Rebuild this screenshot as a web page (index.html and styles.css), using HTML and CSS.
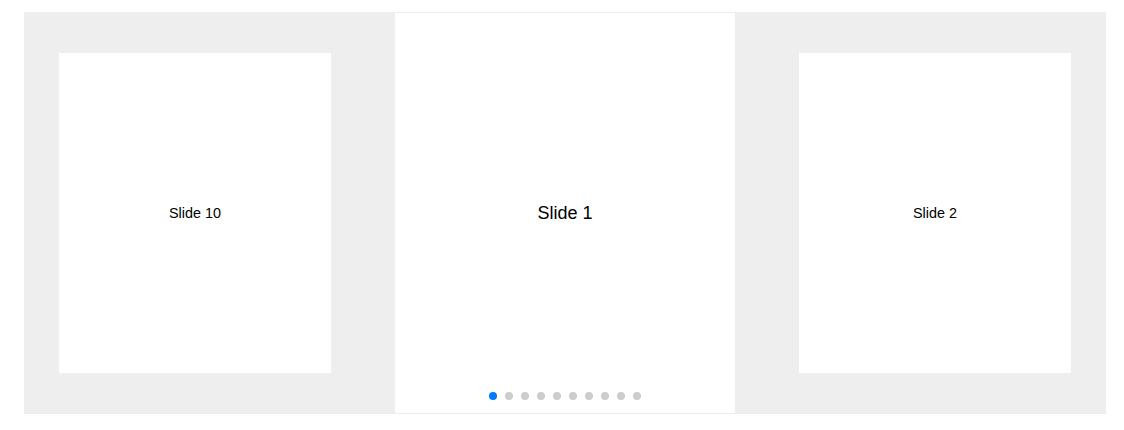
FILE: index.html
```html
<!DOCTYPE html>
<html lang="en">
<head>
    <meta charset="UTF-8">
    <meta name="viewport" content="width=device-width, initial-scale=1.0">
    <title>Slider</title>
    <link rel="stylesheet" href="styles.css">
</head>
<body>
    <div class="slider">
        <div class="track">
            <div class="slide side">Slide 10</div>
            <div class="slide active">Slide 1</div>
            <div class="slide side">Slide 2</div>
        </div>
        <div class="dots">
            <span class="dot on"></span>
            <span class="dot"></span>
            <span class="dot"></span>
            <span class="dot"></span>
            <span class="dot"></span>
            <span class="dot"></span>
            <span class="dot"></span>
            <span class="dot"></span>
            <span class="dot"></span>
            <span class="dot"></span>
        </div>
    </div>
</body>
</html>
```

FILE: styles.css
```css
body {
    margin: 0;
    padding: 12px 24px;
    font-family: "Liberation Sans", Arial, sans-serif;
    color: #000;
    background: #fff;
}

.slider {
    position: relative;
    width: 1080px;
    height: 400px;
    background: #eee;
    border: 1px solid #eee;
}

.track {
    display: flex;
    gap: 30px;
    height: 100%;
}

.slide {
    flex: 0 0 340px;
    height: 400px;
    background: #fff;
    display: flex;
    align-items: center;
    justify-content: center;
    font-size: 18px;
}

.side {
    transform: scale(0.8);
}

.dots {
    position: absolute;
    left: 0;
    right: 0;
    bottom: 13px;
    display: flex;
    justify-content: center;
    gap: 8px;
}

.dot {
    width: 8px;
    height: 8px;
    border-radius: 50%;
    background: #ccc;
}

.dot.on {
    background: #007aff;
}
```
